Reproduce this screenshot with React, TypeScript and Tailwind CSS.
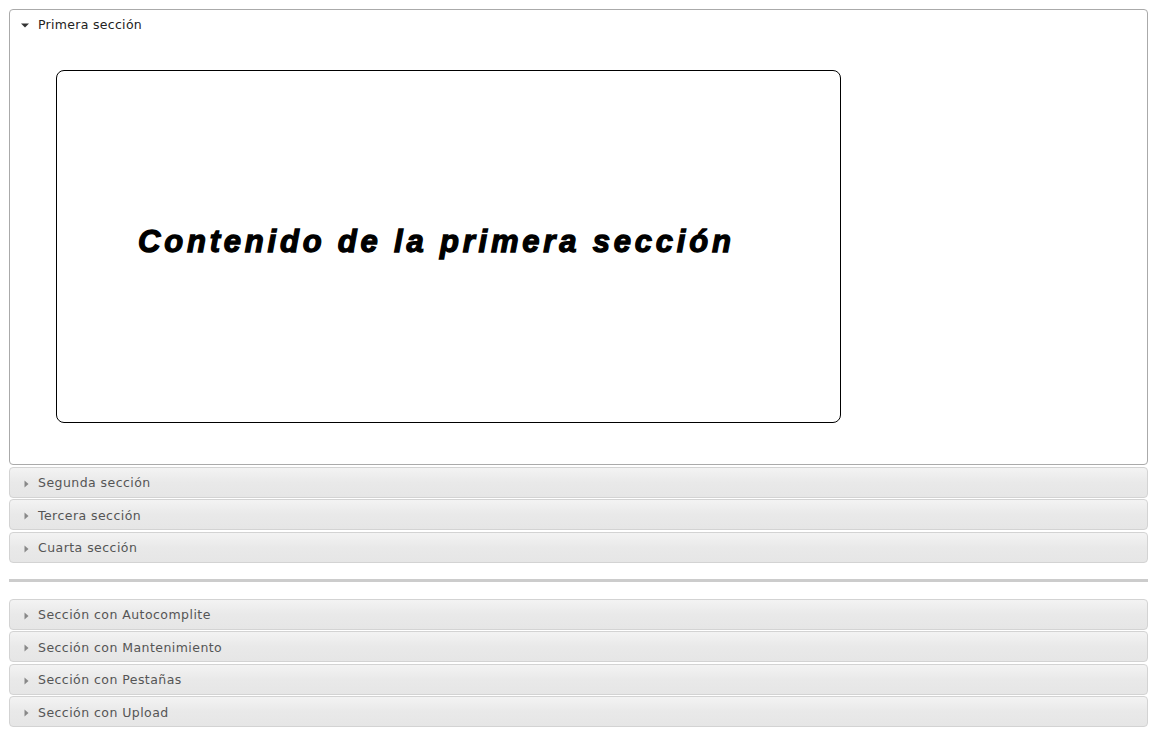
const TOP = ["Segunda sección", "Tercera sección", "Cuarta sección"];
const BOTTOM = [
  "Sección con Autocomplite",
  "Sección con Mantenimiento",
  "Sección con Pestañas",
  "Sección con Upload",
];

function Arrow({ open }: { open?: boolean }) {
  return open ? (
    <svg width="8" height="6" viewBox="0 0 8 6" className="shrink-0">
      <path d="M0 1.5 L8 1.5 L4 5.5 Z" fill="#333" />
    </svg>
  ) : (
    <svg width="6" height="8" viewBox="0 0 6 8" className="shrink-0">
      <path d="M1.5 0.5 L5.5 4 L1.5 7.5 Z" fill="#888" />
    </svg>
  );
}

function Closed({ label }: { label: string }) {
  return (
    <div className="mt-[1.5px] flex h-[31px] items-center rounded-[4px] border border-[#d3d3d3] bg-gradient-to-b from-[#f3f3f3] via-[#e9e9e9] to-[#e6e6e6] pt-[3px] pl-[13px] text-[12.5px] tracking-[0.45px] text-[#555]">
      <Arrow />
      <span className="ml-[9px]">{label}</span>
    </div>
  );
}

export default function App() {
  return (
    <div
      className="min-h-screen bg-white pt-[9px] pl-[9px] pr-[10px]"
      style={{ fontFamily: '"DejaVu Sans", Verdana, sans-serif' }}
    >
      <div className="h-[456px] rounded-[4px] border border-[#aaa]">
        <div className="flex h-[30px] items-center pl-[11px] text-[12.5px] tracking-[0.3px] text-[#222]">
          <Arrow open />
          <span className="ml-[9px]">Primera sección</span>
        </div>
        <div className="pt-[30px] pl-[46px]">
          <div className="flex h-[353px] w-[785px] items-center rounded-[8px] border border-black pb-[8px] pl-[81px]">
            <span
              className="text-[31px] font-black italic tracking-[3.8px] text-black"
              style={{
                fontFamily: '"Liberation Sans", Arial, sans-serif',
                WebkitTextStroke: "1.3px black",
              }}
            >
              Contenido de la primera sección
            </span>
          </div>
        </div>
      </div>
      {TOP.map((t) => (
        <Closed key={t} label={t} />
      ))}
      <div className="mt-[16px] mb-[17px] h-[3px] bg-[#cccccc]" />
      {BOTTOM.map((t) => (
        <Closed key={t} label={t} />
      ))}
    </div>
  );
}
